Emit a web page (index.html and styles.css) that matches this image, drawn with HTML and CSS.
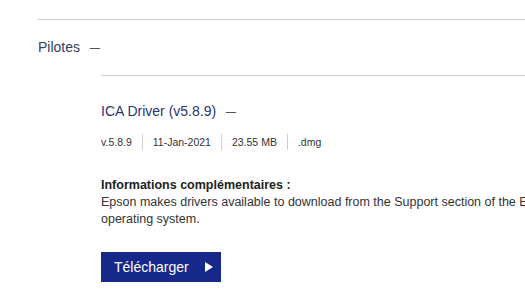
FILE: index.html
```html
<!DOCTYPE html>
<html lang="fr">
<head>
  <meta charset="UTF-8" />
  <title>Pilotes</title>
  <link rel="stylesheet" href="styles.css">
</head>
<body>
  <section class="group">
    <h2 class="group-title">Pilotes <span class="toggle">&ndash;</span></h2>

    <div class="driver">
      <h3 class="driver-title">ICA Driver (v5.8.9) <span class="toggle">&ndash;</span></h3>
      <ul class="meta">
        <li>v.5.8.9</li>
        <li>11-Jan-2021</li>
        <li>23.55 MB</li>
        <li>.dmg</li>
      </ul>
      <div class="info">
        <strong>Informations complémentaires :</strong>
        <p>Epson makes drivers available to download from the Support section of the Epson website for your operating system.</p>
      </div>
      <button class="download">Télécharger <span class="arrow"></span></button>
    </div>
  </section>
</body>
</html>
```

FILE: styles.css
```css
:root {
  --navy: #2a3472;
  --button: #16298b;
  --line: #cfcfcf;
  --text: #333;
}
* {
  box-sizing: border-box;
}
body {
  margin: 0;
  width: 700px;
  font-family: "Liberation Sans", Arial, sans-serif;
  color: var(--text);
  background: #fff;
}
.group {
  margin: 19px 0 0 38px;
  border-top: 1px solid var(--line);
}
.group-title {
  margin: 0;
  padding-top: 17px;
  font-size: 14px;
  line-height: 20px;
  font-weight: 400;
  color: #343c63;
}
.toggle {
  display: inline-block;
  margin-left: 7px;
  transform: scaleX(1.3);
  color: #555;
}
.driver {
  margin: 18px 0 0 63px;
  border-top: 1px solid var(--line);
}
.driver-title {
  margin: 25px 0 0;
  font-size: 14px;
  line-height: 20px;
  font-weight: 400;
  color: var(--navy);
}
.meta {
  display: flex;
  margin: 13px 0 0;
  padding: 0;
  list-style: none;
  font-size: 10.5px;
  line-height: 16px;
}
.meta li {
  padding: 0 10px;
  border-left: 1px solid var(--line);
}
.meta li:first-child {
  padding-left: 0;
  border-left: none;
}
.info {
  margin-top: 27px;
  font-size: 12.5px;
  line-height: 17px;
  width: 580px;
}
.info strong {
  display: block;
  color: #222;
}
.info p {
  margin: 0;
}
.download {
  display: flex;
  align-items: center;
  margin-top: 24px;
  width: 120px;
  height: 30px;
  padding: 0 0 0 13px;
  border: none;
  background: var(--button);
  color: #fff;
  font-family: inherit;
  font-size: 14px;
  cursor: pointer;
}
.arrow {
  margin-left: 16px;
  width: 0;
  height: 0;
  border-top: 5px solid transparent;
  border-bottom: 5px solid transparent;
  border-left: 8px solid #fff;
}
```
